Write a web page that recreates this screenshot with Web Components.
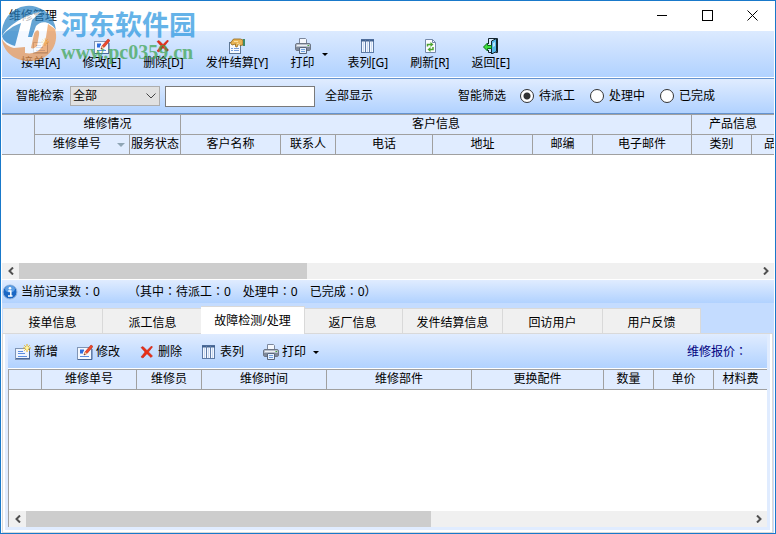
<!DOCTYPE html>
<html lang="zh-CN">
<head>
<meta charset="utf-8">
<title>维修管理</title>
<style>
    html, body {
        margin: 0;
        height: 100%;
    }
    body {
        font: 12px/16px "Noto Sans", "Noto Sans CJK SC", sans-serif;
        color: #000;
        overflow: hidden;
    }
</style>
</head>
<body>
<repair-window></repair-window>

<script>
const ICONS = {
    add: `
        <rect x="0.5" y="4.5" width="14" height="11" fill="#eef4fd" stroke="#8095b5"/>
        <path d="M1 14.5h13M14.5 5v10" stroke="#4a6a9c"/>
        <path d="M3 7.5h5M3 9.5h7M3 12.5h9" stroke="#5b8de0"/>
        <path d="M12 0v8M8 4h8M9.300 1.300l5.400 5.400M14.700 1.300l-5.400 5.400" stroke="#e8b21c"/>
        <circle cx="12" cy="4" r="1.800" fill="#fff6a0"/>`,
    edit: `
        <rect x="0.500" y="3.500" width="14" height="12" fill="#f4f8ff" stroke="#8095b5"/>
        <path d="M1 15.500h14V5" fill="none" stroke="#4a6a9c"/>
        <path d="M3 6.500h4M3 8.500h3" stroke="#2f6fe0" stroke-width="2"/>
        <path d="M3 12.500h9" stroke="#5b8de0"/>
        <path d="M7 11l1-3 6-7 2 1.500-6 7z" fill="#ee4a2c" stroke="#b52a18" stroke-width="0.600"/>
        <path d="M7 11l1-3 2 1.500z" fill="#f7d9a0"/>
        <path d="M7 11l0.500-1.200 0.800 0.700z" fill="#222"/>`,
    remove: `
        <path d="M2 3.500L4 2.500L8 6.500L12.500 2L13.500 3L9.500 8L13.500 12L12 13.500L8 9.700L4 14L2 13L6 8z" fill="#ea2f16" stroke="#b81f10" stroke-width="0.500"/>`,
    settle: `
        <rect x="0.500" y="4.500" width="11" height="11" fill="#f6f9ff" stroke="#5e7795"/>
        <path d="M2 10.500h2M5 10.500h5M2 12.500h2M5 12.500h5" stroke="#7aa0dc"/>
        <path d="M1.500 5l3-4h7l2.500 1v5l-3 0.500-1.500-1.500-1.500 3-1.500-0.500L6.500 6 3 7z" fill="#e9b455" stroke="#8f6417" stroke-width="0.800"/>
        <path d="M5 3.500h4M8 5l3 2" stroke="#fbe0a0"/>
        <rect x="14" y="1" width="2" height="7" fill="#3d8a6a"/>`,
    print: `
        <path d="M4.500 0.500h6l1 1v5h-7z" fill="#f5f8fd" stroke="#7c879c"/>
        <rect x="0.500" y="5.500" width="15" height="7" rx="1.500" fill="#b8bfca" stroke="#6d7685"/>
        <path d="M2 7.500h12" stroke="#eceff4"/>
        <rect x="1" y="9" width="3" height="3" fill="#7f8999"/>
        <rect x="12" y="9" width="3" height="3" fill="#7f8999"/>
        <path d="M4.500 9.500h7v6h-7z" fill="#e6f0fd" stroke="#59667c"/>
        <path d="M6 11.500h4M6 13.500h4" stroke="#6fa0e0"/>
        <path d="M12.500 7.500h1.500" stroke="#41a43c"/>`,
    columns: `
        <rect x="1.500" y="1.500" width="12" height="13" fill="#f3f7fe" stroke="#5e7ba6"/>
        <path d="M1 2.500h13" stroke="#41618f" stroke-width="2"/>
        <path d="M5.500 2v13M9.500 2v13" stroke="#5e7ba6"/>
        <path d="M3.500 4v10M7.500 4v10M11.500 4v10" stroke="#c8d9f2"/>`,
    refresh: `
        <path d="M3.500 1.500h7l3 3v10h-10z" fill="#fbfcff" stroke="#7488a8"/>
        <path d="M10.500 1.500v3h3" fill="none" stroke="#7488a8"/>
        <path d="M5.500 8.500V6.500H9" fill="none" stroke="#4da32f" stroke-width="1.500"/>
        <path d="M8.500 4l3 2.500-3 2.500z" fill="#4da32f"/>
        <path d="M11 9v2.500H8" fill="none" stroke="#4da32f" stroke-width="1.500"/>
        <path d="M8.500 9l-3 2.500 3 2.500z" fill="#4da32f"/>`,
    back: `
        <path d="M5.500 6V0.500h9v14h-2M5.500 12v2.500h3" fill="#d9ecfb" stroke="#14242e"/>
        <path d="M8.500 3l5-2.500v13l-5 2.500z" fill="#55b7e8" stroke="#14242e"/>
        <path d="M10 5l2-1v4l-2 1z" fill="#b8e6fb"/>
        <path d="M0.500 9l4-4v2.500h4v3h-4V13z" fill="#3ce03c" stroke="#0c6b1c"/>`,
    info: `
        <circle cx="8" cy="8" r="7" fill="#1b67c4" stroke="#9ab8dd"/>
        <ellipse cx="8" cy="5" rx="5" ry="3.500" fill="#5d9fe6"/>
        <circle cx="8" cy="4.300" r="1.300" fill="#fff"/>
        <path d="M6.300 7h2.500v4.500M6 12h4.500" fill="none" stroke="#fff" stroke-width="1.500"/>`
};

class AppIcon extends HTMLElement {
    constructor() {
        super();
        this._shadowRoot = this.attachShadow({ mode: 'open' });
    }

    connectedCallback() {
        this._shadowRoot.innerHTML = `
            <style>
            :host { display: block; flex: none; width: 16px; height: 16px; }
            svg { display: block; }
            </style>
            <svg width="16" height="16" viewBox="0 0 16 16" aria-hidden="true">${ICONS[this.getAttribute('name')]}</svg>`;
    }
}

customElements.define('app-icon', AppIcon);

// Button with an icon above (default) or before ("inline") its label
class ToolButton extends HTMLElement {
    constructor() {
        super();
        this._shadowRoot = this.attachShadow({ mode: 'open' });
    }

    connectedCallback() {
        const arrow = this.hasAttribute('menu') ? '<i></i>' : '';
        this._shadowRoot.innerHTML = `
            <style>
            :host { display: block; flex: none; }
            button {
                display: flex;
                align-items: center;
                gap: 7px;
                padding: 0;
                border: 0;
                background: none;
                font: inherit;
                color: inherit;
                white-space: nowrap;
            }
            span { display: flex; flex-direction: column; align-items: center; gap: 1px; }
            :host([inline]) span { flex-direction: row; gap: 3px; }
            i { border: 3px solid transparent; border-top-color: #000; border-bottom: 0; }
            </style>
            <button type="button">
                <span><app-icon name="${this.getAttribute('icon')}"></app-icon><slot></slot></span>${arrow}
            </button>`;
    }
}

customElements.define('tool-button', ToolButton);

const scrollTemplate = document.createElement('template');

scrollTemplate.innerHTML = `
    <style>
    :host { display: flex; flex: none; height: 16px; background: #f0f0f0; }
    button { flex: none; width: 17px; padding: 0; border: 0; background: none; }
    svg { display: block; margin: auto; }
    .track { flex: 1; }
    .thumb { height: 100%; width: var(--thumb, 50%); background: #cdcdcd; }
    </style>
    <button type="button" aria-label="向左"><svg width="8" height="8"><path d="M6 0.500L2.500 4L6 7.500" fill="none" stroke="#505050" stroke-width="2"/></svg></button>
    <div class="track"><div class="thumb"></div></div>
    <button type="button" aria-label="向右"><svg width="8" height="8"><path d="M2 0.500L5.500 4L2 7.500" fill="none" stroke="#505050" stroke-width="2"/></svg></button>
    `;

class ScrollBar extends HTMLElement {
    constructor() {
        super();
        this._shadowRoot = this.attachShadow({ mode: 'open' });
        this._shadowRoot.appendChild(scrollTemplate.content.cloneNode(true));
    }
}

customElements.define('scroll-bar', ScrollBar);

const GRIDS = {
    orders: {
        // the last column takes what is left and is cut by the window edge
        columns: [['', 33], ['维修单号', 95, 'sort'], ['服务状态', 51], ['客户名称', 100], ['联系人', 55], ['电话', 97],
            ['地址', 100], ['邮编', 60], ['电子邮件', 99], ['类别', 60], ['品', 0, 'cut']],
        groups: [['维修情况', 2], ['客户信息', 6], ['产品信息', 2]]
    },
    faults: {
        columns: [['', 33], ['维修单号', 95], ['维修员', 65], ['维修时间', 125], ['维修部件', 145], ['更换配件', 132],
            ['数量', 50], ['单价', 60], ['材料费', 0]]
    }
};

class DataGrid extends HTMLElement {
    constructor() {
        super();
        this._shadowRoot = this.attachShadow({ mode: 'open' });
    }

    connectedCallback() {
        const { columns, groups } = GRIDS[this.getAttribute('type')];
        const cols = columns.map(([, width]) => `<col${width ? ` style="width: ${width}px"` : ''}>`).join('');
        const cells = (groups ? columns.slice(1) : columns)
            .map(([name, , kind]) => `<th class="${kind || ''}">${name}${kind === 'sort' ? '<i></i>' : ''}</th>`).join('');
        const top = groups
            ? `<tr><th rowspan="2"></th>${groups.map(([name, span]) => `<th colspan="${span}">${name}</th>`).join('')}</tr>`
            : '';

        this._shadowRoot.innerHTML = `
            <style>
            :host { display: flex; flex-direction: column; background: #fff; border-top: 1px solid #a0a0a0; }
            table { width: 100%; table-layout: fixed; border-spacing: 0; }
            th {
                box-sizing: border-box;
                height: 20px;
                padding: 0 0 2px;
                border: solid #a0a0a0;
                border-width: 0 1px 1px 0;
                background: #e0ecff;
                font-weight: normal;
                line-height: 16px;
                text-align: center;
                white-space: nowrap;
                overflow: hidden;
            }
            th:last-child { border-right: 0; }
            .cut { padding-left: 12px; text-align: left; text-overflow: clip; }
            .sort { padding-left: 14px; }
            .sort i {
                display: inline-block;
                margin: 0 0 1px 16px;
                border: 4px solid transparent;
                border-top-color: #8fa5b5;
                border-bottom: 0;
            }
            .body { flex: 1; min-height: var(--body-height, 0); }
            </style>
            <table><colgroup>${cols}</colgroup><thead>${top}<tr>${cells}</tr></thead></table>
            <div class="body"></div>
            <scroll-bar></scroll-bar>`;
    }
}

customElements.define('data-grid', DataGrid);

const searchTemplate = document.createElement('template');

searchTemplate.innerHTML = `
    <style>
    :host {
        display: flex;
        align-items: center;
        height: 34px;
        padding-left: 14px;
        border: solid #6593cf;
        border-width: 1px 0;
        background: linear-gradient(#e0ecff, #b1d2ff);
        white-space: nowrap;
    }
    .pick { position: relative; margin: 0 5px 0 6px; }
    .pick svg { position: absolute; right: 4px; top: 7px; pointer-events: none; }
    select, input[type=text] {
        display: block;
        box-sizing: border-box;
        margin: 0;
        border-radius: 0;
        font: inherit;
        color: inherit;
    }
    select {
        appearance: none;
        width: 90px;
        height: 20px;
        padding: 0 2px;
        border: 1px solid #adadad;
        background: #e1e1e1;
    }
    input[type=text] { width: 150px; height: 21px; border: 1px solid #7a7a7a; background: #fff; }
    button { margin: 0 85px 0 10px; padding: 0; border: 0; background: none; font: inherit; color: inherit; }
    fieldset { display: flex; align-items: center; gap: 15px; margin: 0; padding: 0; border: 0; }
    fieldset label { display: flex; align-items: center; gap: 5px; }
    fieldset span { margin-right: -1px; }
    input[type=radio] {
        appearance: none;
        box-sizing: border-box;
        width: 14px;
        height: 14px;
        margin: 0;
        border: 1px solid #333;
        border-radius: 50%;
        background: #fff;
    }
    input[type=radio]:checked { background: radial-gradient(circle, #333 3px, #fff 4px); }
    </style>
    <label for="field">智能检索</label>
    <div class="pick">
        <select id="field"><option>全部</option></select>
        <svg width="10" height="6"><path d="M0.500 0.500L5 5L9.500 0.500" fill="none" stroke="#444"/></svg>
    </div>
    <input type="text" aria-label="检索内容">
    <button type="button">全部显示</button>
    <fieldset>
        <span>智能筛选</span>
        <label><input type="radio" name="state" checked>待派工</label>
        <label><input type="radio" name="state">处理中</label>
        <label><input type="radio" name="state">已完成</label>
    </fieldset>
    `;

class SearchBar extends HTMLElement {
    constructor() {
        super();
        this._shadowRoot = this.attachShadow({ mode: 'open' });
        this._shadowRoot.appendChild(searchTemplate.content.cloneNode(true));
    }
}

customElements.define('search-bar', SearchBar);

const tabsTemplate = document.createElement('template');

tabsTemplate.innerHTML = `
    <style>
    :host { display: flex; flex-direction: column; min-height: 0; background: #c4dcff; }
    nav { display: flex; align-items: flex-end; height: 30px; padding-left: 1px; }
    button {
        box-sizing: border-box;
        width: 100px;
        height: 25px;
        padding: 3px 0 0;
        border: solid #d9d9d9;
        border-width: 1px 1px 0 0;
        background: #f0f0f0;
        font: inherit;
        color: inherit;
    }
    button:last-child { width: 98px; }
    button.active {
        position: relative;
        z-index: 1;
        width: 104px;
        height: 28px;
        margin: 0 -2px -1px;
        padding: 0;
        background: #fff;
    }
    .panel {
        flex: 1;
        display: flex;
        flex-direction: column;
        min-height: 0;
        margin-right: 1px;
        padding: 0 2px 2px;
        border: 1px solid #d9d9d9;
        background: #fff;
    }
    .page { flex: 1; display: flex; flex-direction: column; padding: 0 3px 3px; background: #e0ecff; }
    </style>
    <nav role="tablist"></nav>
    <div class="panel"><div class="page"><slot></slot></div></div>
    `;

class TabPanel extends HTMLElement {
    constructor() {
        super();
        this._shadowRoot = this.attachShadow({ mode: 'open' });
        this._shadowRoot.appendChild(tabsTemplate.content.cloneNode(true));
        this.$nav = this.shadowRoot.querySelector('nav');
    }

    connectedCallback() {
        const active = this.getAttribute('active');
        for (const name of this.getAttribute('tabs').split(',')) {
            const button = document.createElement('button');
            button.type = 'button';
            button.setAttribute('role', 'tab');
            button.textContent = name;
            button.classList.toggle('active', name === active);
            button.addEventListener('click', () => this.tabClickHandler(button));
            this.$nav.appendChild(button);
        }
    }

    tabClickHandler(button) {
        this.$nav.querySelector('.active').classList.remove('active');
        button.classList.add('active');
    }
}

customElements.define('tab-panel', TabPanel);

const markTemplate = document.createElement('template');

markTemplate.innerHTML = `
    <style>
    :host { display: flex; align-items: flex-start; pointer-events: none; white-space: nowrap; opacity: 0.72; }
    svg { flex: none; }
    .name { margin-top: 4px; color: #2b97e0; font: bold 27px/32px "Noto Sans CJK SC", sans-serif; }
    .site { color: #3fa552; font: bold 20px/24px "Liberation Serif", serif; }
    </style>
    <svg width="60" height="62" viewBox="0 0 60 62" aria-hidden="true">
        <circle cx="28" cy="30" r="27" fill="#fff"/>
        <path d="M1 32A27 27 0 0 1 55 26C49 17 40 16 35 22L31 33H27L31 16L40 8C26 10 8 20 1 32z" fill="#2a83c4"/>
        <path d="M1 32C6 26 12 22 20 19L14 42C7 40 2 37 1 32z" fill="#2a83c4"/>
        <path d="M1 35C3 39 8 43 13 44L24 43V49C36 51 42 45 45 33L47 20L54 25C59 41 47 58 28 57C13 57 2 47 1 35z" fill="#ee9a55"/>
        <path d="M30 44L33 30C35 25 39 25 38 31L36 42C34 44 32 45 30 44z" fill="#ee9a55"/>
    </svg>
    <div>
        <div class="name">河东软件园</div>
        <div class="site">www.pc0359.cn</div>
    </div>
    `;

class SiteMark extends HTMLElement {
    constructor() {
        super();
        this._shadowRoot = this.attachShadow({ mode: 'open' });
        this._shadowRoot.appendChild(markTemplate.content.cloneNode(true));
    }
}

customElements.define('site-mark', SiteMark);

const windowTemplate = document.createElement('template');

windowTemplate.innerHTML = `
    <style>
    :host {
        position: relative;
        display: flex;
        flex-direction: column;
        box-sizing: border-box;
        height: 100vh;
        border: 1px solid #1979ca;
        background: #fff;
    }
    header { display: flex; align-items: center; height: 30px; padding-left: 8px; }
    h1 { flex: 1; margin: 0; font: inherit; }
    header button { width: 45px; height: 30px; padding: 0 0 2px; border: 0; background: none; }
    header svg { display: block; margin: auto; }
    main { flex: 1; display: flex; flex-direction: column; min-height: 0; padding: 0 1px; }
    .main-tools {
        display: flex;
        align-items: flex-start;
        gap: 22px;
        height: 39px;
        padding: 7px 0 0 19px;
        border-bottom: 1px solid #fff;
        background: linear-gradient(#dceaff, #b1d2ff);
    }
    .main-tools [menu] { margin-right: -2px; }
    .orders { --body-height: 108px; --thumb: 39%; }
    .status {
        display: flex;
        align-items: center;
        height: 23px;
        margin-top: 1px;
        background: linear-gradient(#e0ecff, #b1d2ff);
    }
    .status app-icon { margin-right: 3px; }
    /* Taiwan forms: colon and brackets stand in the middle of their square */
    .status, .price { font-family: "Noto Sans", "Noto Sans CJK TC", sans-serif; }
    .status .total { margin-right: 28px; }
    .status .part { margin-right: 12px; }
    tab-panel { flex: 1; }
    .sub-tools {
        display: flex;
        align-items: center;
        gap: 19px;
        height: 32px;
        padding: 2px 20px 0 7px;
        border-bottom: 1px solid #fff;
        background: linear-gradient(#e0ecff, #b1d2ff);
    }
    .price { margin-left: auto; color: #000080; }
    .faults { flex: 1; border-left: 1px solid #a0a0a0; --thumb: 56%; }
    site-mark { position: absolute; left: 0; top: 3px; }
    </style>
    <header>
        <h1>维修管理</h1>
        <button type="button" aria-label="最小化"><svg width="11" height="11"><path d="M0 5.500h10" stroke="#000"/></svg></button>
        <button type="button" aria-label="最大化"><svg width="11" height="11"><rect x="0.500" y="0.500" width="10" height="10" fill="none" stroke="#000"/></svg></button>
        <button type="button" aria-label="关闭"><svg width="11" height="11"><path d="M0.500 0.500l10 10M10.500 0.500l-10 10" stroke="#000"/></svg></button>
    </header>
    <main>
        <div class="main-tools">
            <tool-button icon="add">接单[A]</tool-button>
            <tool-button icon="edit">修改[E]</tool-button>
            <tool-button icon="remove">删除[D]</tool-button>
            <tool-button icon="settle">发件结算[Y]</tool-button>
            <tool-button icon="print" menu>打印</tool-button>
            <tool-button icon="columns">表列[G]</tool-button>
            <tool-button icon="refresh">刷新[R]</tool-button>
            <tool-button icon="back">返回[E]</tool-button>
        </div>
        <search-bar></search-bar>
        <data-grid class="orders" type="orders"></data-grid>
        <div class="status" lang="zh-TW">
            <app-icon name="info"></app-icon>
            <span class="total">当前记录数：0</span>
            <span class="part">（其中：待派工：0</span>
            <span class="part">处理中：0</span>
            <span>已完成：0）</span>
        </div>
        <tab-panel tabs="接单信息,派工信息,故障检测/处理,返厂信息,发件结算信息,回访用户,用户反馈" active="故障检测/处理">
            <div class="sub-tools">
                <tool-button icon="add" inline>新增</tool-button>
                <tool-button icon="edit" inline>修改</tool-button>
                <tool-button icon="remove" inline>删除</tool-button>
                <tool-button icon="columns" inline>表列</tool-button>
                <tool-button icon="print" inline menu>打印</tool-button>
                <span class="price" lang="zh-TW">维修报价：</span>
            </div>
            <data-grid class="faults" type="faults"></data-grid>
        </tab-panel>
    </main>
    <site-mark></site-mark>
    `;

class RepairWindow extends HTMLElement {
    constructor() {
        super();
        this._shadowRoot = this.attachShadow({ mode: 'open' });
        this._shadowRoot.appendChild(windowTemplate.content.cloneNode(true));
    }
}

customElements.define('repair-window', RepairWindow);
</script>
</body>
</html>
